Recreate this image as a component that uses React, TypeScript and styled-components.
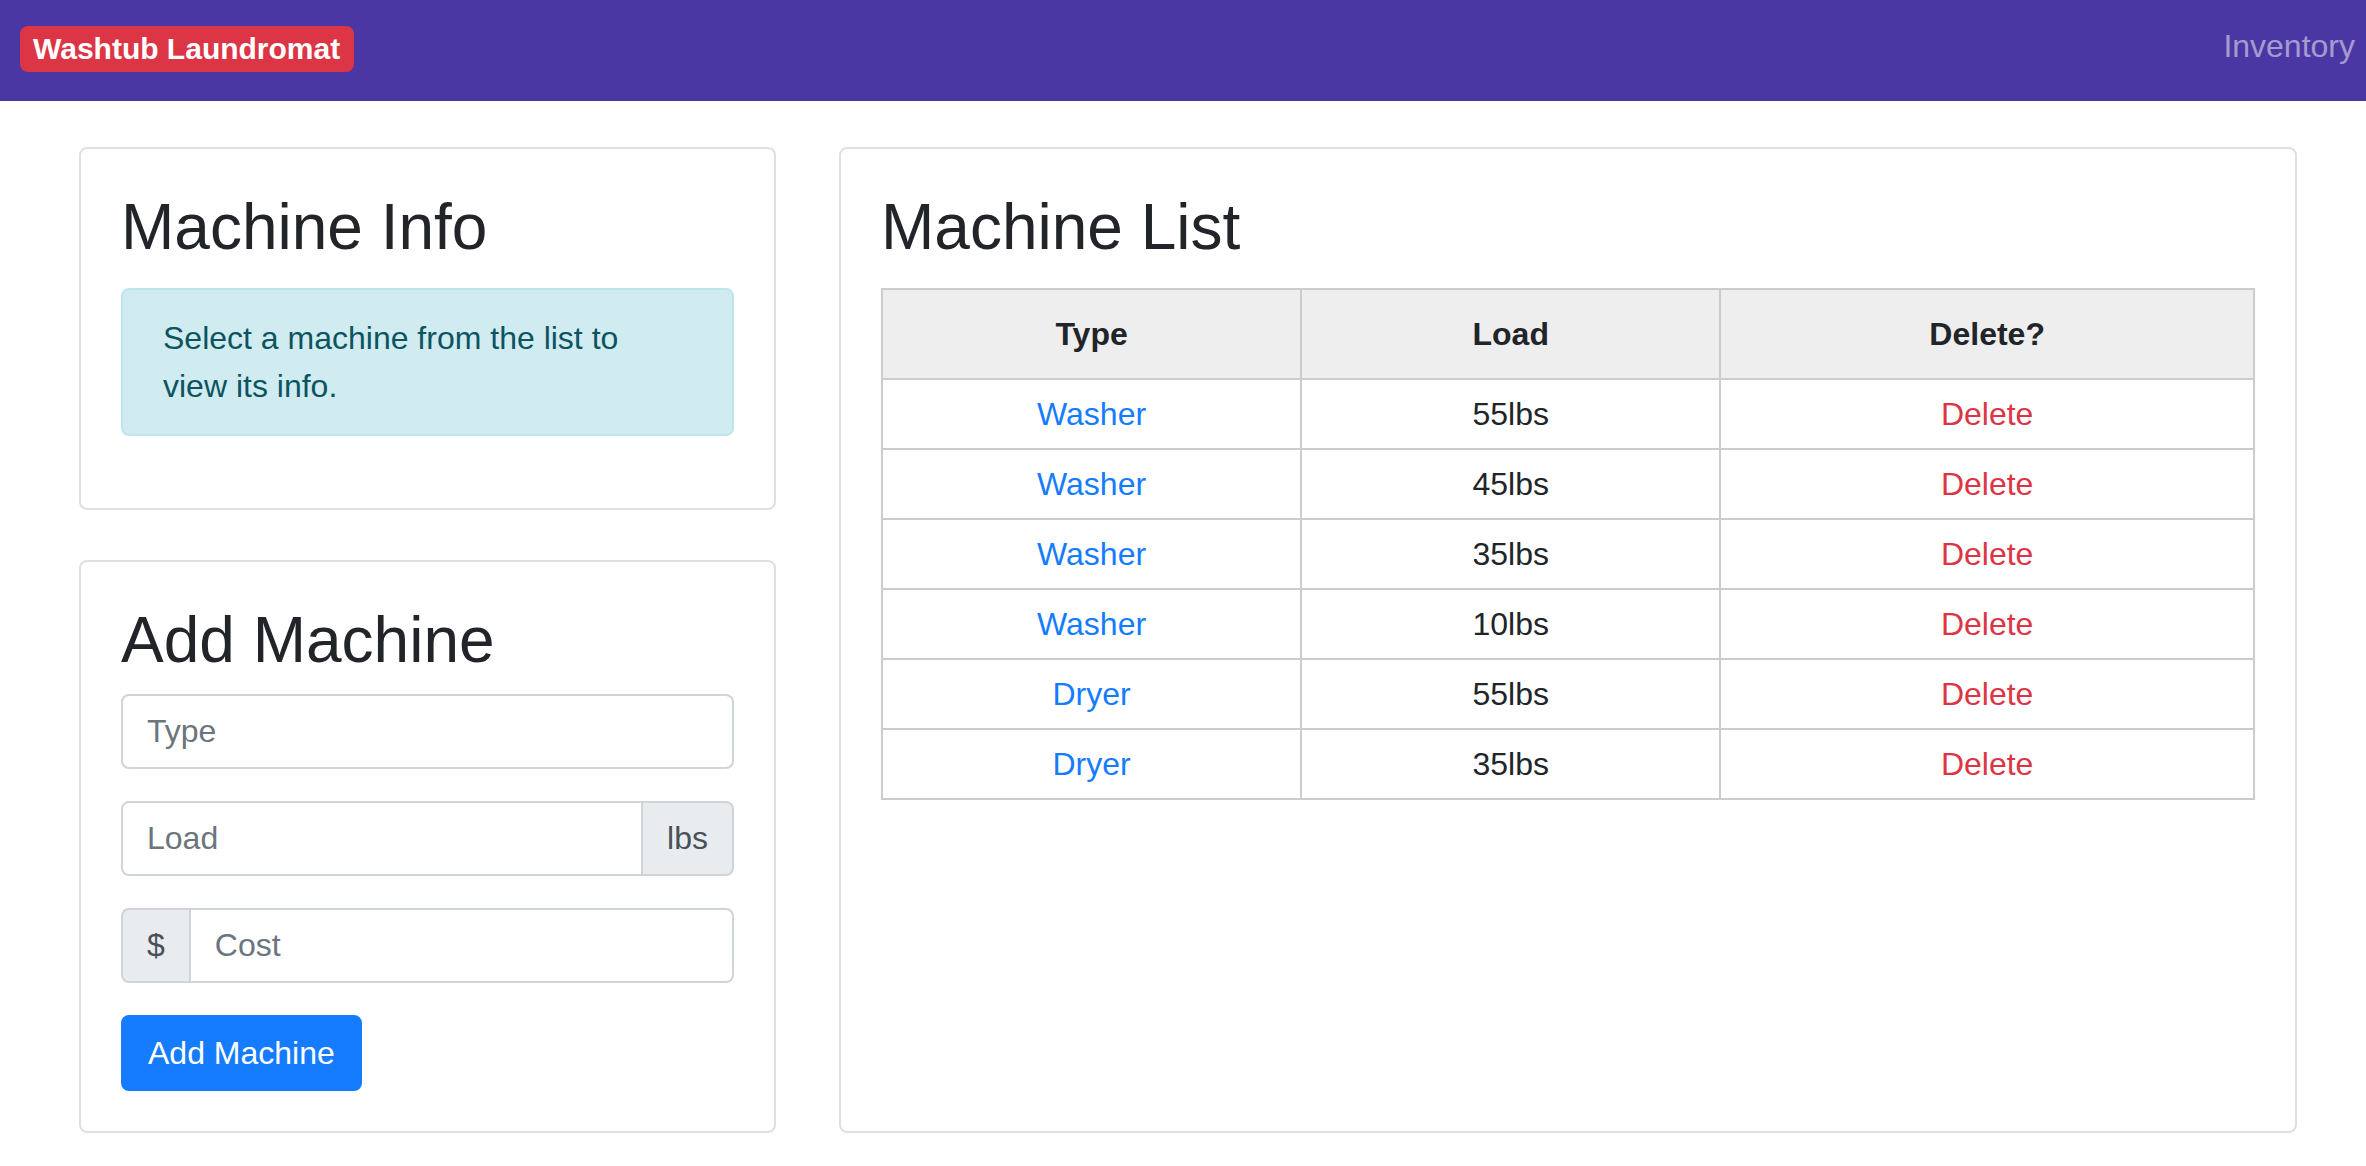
import React from 'react'
import styled, { createGlobalStyle } from 'styled-components'

interface Machine {
  id: number
  type: string
  load: number
}

const MACHINES: Machine[] = [
  { id: 1, type: 'Washer', load: 55 },
  { id: 2, type: 'Washer', load: 45 },
  { id: 3, type: 'Washer', load: 35 },
  { id: 4, type: 'Washer', load: 10 },
  { id: 5, type: 'Dryer', load: 55 },
  { id: 6, type: 'Dryer', load: 35 },
]

export default function App() {
  return (
    <>
      <GlobalStyle />
      <NavBar>
        <Brand>Washtub Laundromat</Brand>
        <NavLink href="#">Inventory</NavLink>
      </NavBar>
      <Main>
        <LeftColumn>
          <Card>
            <Heading $gap={22}>Machine Info</Heading>
            <Alert>Select a machine from the list to view its info.</Alert>
          </Card>
          <Card>
            <Heading $gap={15}>Add Machine</Heading>
            <FormGroup>
              <Input placeholder="Type" />
            </FormGroup>
            <FormGroup>
              <InputGroup>
                <Input placeholder="Load" $side="left" />
                <Addon $side="right">lbs</Addon>
              </InputGroup>
            </FormGroup>
            <FormGroup>
              <InputGroup>
                <Addon $side="left">$</Addon>
                <Input placeholder="Cost" $side="right" />
              </InputGroup>
            </FormGroup>
            <PrimaryButton>Add Machine</PrimaryButton>
          </Card>
        </LeftColumn>
        <Card>
          <Heading $gap={22}>Machine List</Heading>
          <Table>
            <colgroup>
              <col style={{ width: '30.55%' }} />
              <col style={{ width: '30.55%' }} />
              <col />
            </colgroup>
            <thead>
              <tr>
                <Th>Type</Th>
                <Th>Load</Th>
                <Th>Delete?</Th>
              </tr>
            </thead>
            <tbody>
              {MACHINES.map(({ id, type, load }) => (
                <tr key={id}>
                  <Td>
                    <TextLink href="#">{type}</TextLink>
                  </Td>
                  <Td>{load}lbs</Td>
                  <Td>
                    <TextLink href="#" $danger>
                      Delete
                    </TextLink>
                  </Td>
                </tr>
              ))}
            </tbody>
          </Table>
        </Card>
      </Main>
    </>
  )
}

const GlobalStyle = createGlobalStyle`
  * {
    box-sizing: border-box;
  }
  body {
    margin: 0;
    background: #fff;
    color: #212529;
    font-family: "Liberation Sans", Arial, sans-serif;
    font-size: 32px;
    line-height: 1.5;
  }
`

const NavBar = styled.nav`
  display: flex;
  align-items: center;
  justify-content: space-between;
  height: 101px;
  padding: 0 11px 0 20px;
  background: #4b37a3;
`

const Brand = styled.span`
  display: inline-block;
  margin-top: -4px;
  padding: 8px 14px 8px 13px;
  border-radius: 8px;
  background: #dc3545;
  color: #fff;
  font-size: 30px;
  font-weight: 700;
  line-height: 1;
`

const NavLink = styled.a`
  margin-top: -10px;
  color: rgba(255, 255, 255, 0.5);
  font-size: 32px;
  text-decoration: none;
`

const Main = styled.main`
  display: grid;
  grid-template-columns: 697px 1458px;
  column-gap: 63px;
  padding: 46px 0 34px 79px;
`

const LeftColumn = styled.div`
  display: flex;
  flex-direction: column;
  gap: 50px;
`

const Card = styled.section`
  padding: 40px;
  border: 2px solid #e0e0e0;
  border-radius: 8px;
  background: #fff;
`

const Heading = styled.h2<{ $gap: number }>`
  margin: 0 0 ${(p) => p.$gap}px;
  font-size: 64px;
  font-weight: 500;
  line-height: 1.2;
  color: #212529;
`

const Alert = styled.div`
  margin-bottom: 32px;
  padding: 24px 70px 24px 40px;
  border: 2px solid #bee5eb;
  border-radius: 8px;
  background: #d1ecf1;
  color: #0c5460;
`

const FormGroup = styled.div`
  margin-bottom: 32px;
`

const InputGroup = styled.div`
  display: flex;
  align-items: stretch;
`

const Input = styled.input<{ $side?: 'left' | 'right' }>`
  flex: 1 1 auto;
  display: block;
  width: 100%;
  min-width: 0;
  height: 75px;
  padding: 12px 24px;
  border: 2px solid #ced4da;
  border-radius: ${(p) =>
    p.$side === 'left' ? '8px 0 0 8px' : p.$side === 'right' ? '0 8px 8px 0' : '8px'};
  background: #fff;
  color: #495057;
  font-family: inherit;
  font-size: 32px;
  line-height: 1.5;

  &::placeholder {
    color: #6c757d;
  }
`

const Addon = styled.span<{ $side: 'left' | 'right' }>`
  display: flex;
  align-items: center;
  padding: 0 24px;
  border: 2px solid #ced4da;
  ${(p) => (p.$side === 'left' ? 'border-right: none;' : 'border-left: none;')}
  border-radius: ${(p) => (p.$side === 'left' ? '8px 0 0 8px' : '0 8px 8px 0')};
  background: #e9ecef;
  color: #495057;
`

const PrimaryButton = styled.button`
  display: inline-block;
  height: 76px;
  padding: 0 25px;
  border: 2px solid #157cff;
  border-radius: 8px;
  background: #157cff;
  color: #fff;
  font-family: inherit;
  font-size: 32px;
  line-height: 1.5;
  cursor: pointer;
`

const Table = styled.table`
  width: 100%;
  table-layout: fixed;
  border-collapse: collapse;
  border: 2px solid #cccccc;
`

const Th = styled.th`
  padding: 20px 12px;
  border: 2px solid #cccccc;
  background: #eeeeee;
  color: #212529;
  font-weight: 700;
  text-align: center;
`

const Td = styled.td`
  padding: 10px 12px;
  border: 2px solid #cccccc;
  text-align: center;
  color: #212529;
`

const TextLink = styled.a<{ $danger?: boolean }>`
  color: ${(p) => (p.$danger ? '#dc3545' : '#157cff')};
  text-decoration: none;
`
